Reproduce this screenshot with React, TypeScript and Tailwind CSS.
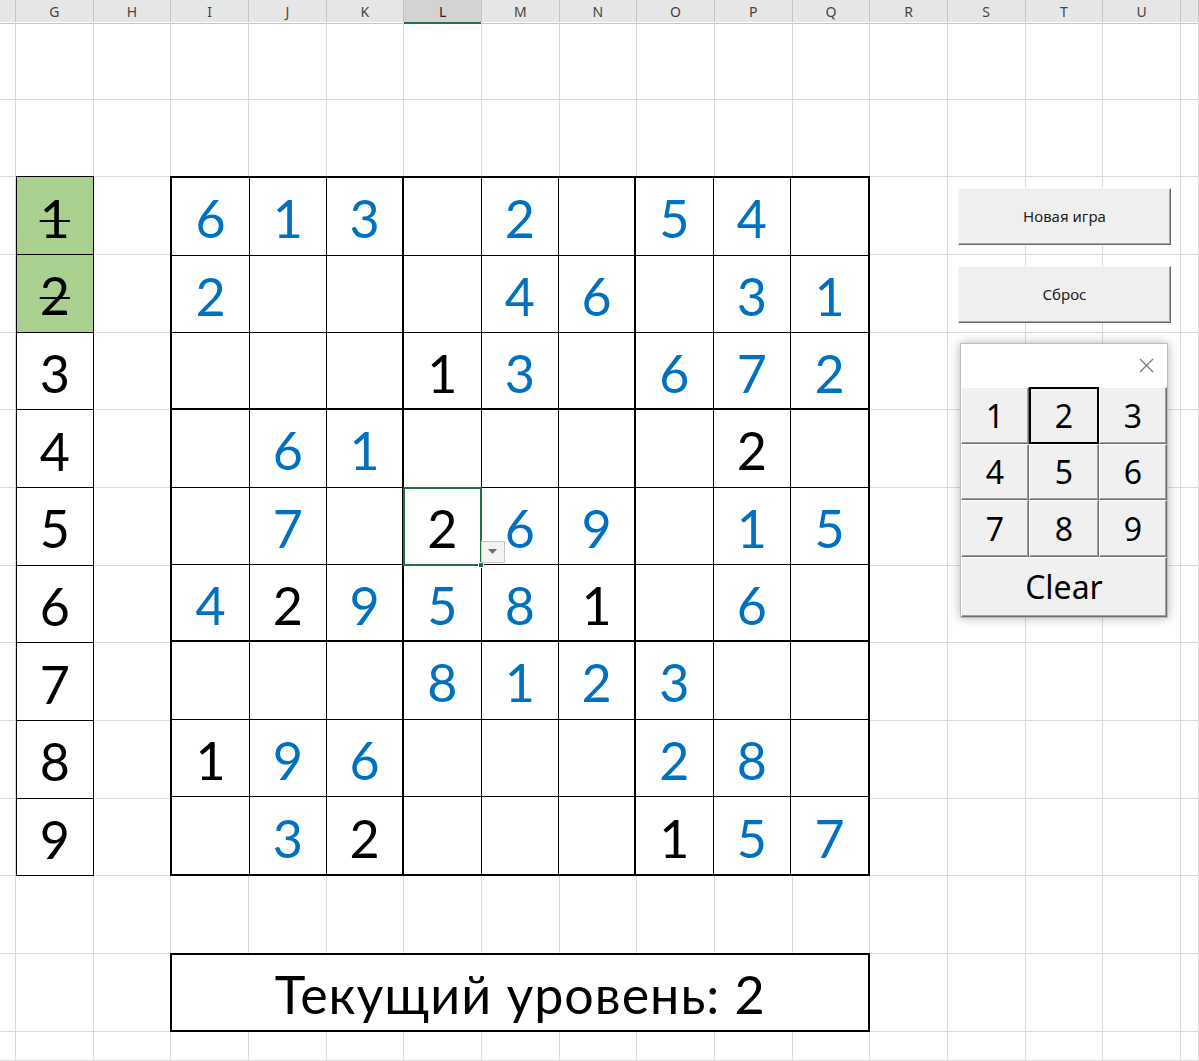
import React from "react";

const COLS = ["", "G", "H", "I", "J", "K", "L", "M", "N", "O", "P", "Q", "R", "S", "T", "U", ""];

// "k" suffix = digit typed by the player (black), otherwise a given (blue)
const BOARD = [
  ["6", "1", "3", "", "2", "", "5", "4", ""],
  ["2", "", "", "", "4", "6", "", "3", "1"],
  ["", "", "", "1k", "3", "", "6", "7", "2"],
  ["", "6", "1", "", "", "", "", "2k", ""],
  ["", "7", "", "2k", "6", "9", "", "1", "5"],
  ["4", "2k", "9", "5", "8", "1k", "", "6", ""],
  ["", "", "", "8", "1", "2", "3", "", ""],
  ["1k", "9", "6", "", "", "", "2", "8", ""],
  ["", "3", "2k", "", "", "", "1k", "5", "7"],
];

const USED = [1, 2];

const cellFont = "font-['Lato','Open_Sans',sans-serif] text-[52px] leading-none";

function Header() {
  return (
    <div className="grid h-[22px] grid-cols-[16px_repeat(15,77.67px)_1fr] bg-[#e6e6e6]">
      {COLS.map((c, i) =>
        c === "L" ? (
          <div
            key={i}
            className="flex items-center justify-center border-r border-b-2 border-r-[#c4c4c4] border-b-[#217346] bg-[#d3d3d3] pt-[1px] text-[14px] text-[#222]"
          >
            {c}
          </div>
        ) : (
          <div
            key={i}
            className="flex items-center justify-center border-r border-b border-[#c4c4c4] text-[14px] text-[#444]"
          >
            {c}
          </div>
        )
      )}
    </div>
  );
}

function Board() {
  return (
    <div className="col-start-4 col-span-9 row-start-3 row-span-9 z-10 -mt-[1px] -ml-[1px] grid grid-cols-9 grid-rows-9 border-2 border-black bg-white">
      {BOARD.map((row, r) =>
        row.map((v, c) => {
          const right = c === 8 ? "" : c === 2 || c === 5 ? "border-r-2" : "border-r";
          const bottom = r === 8 ? "" : r === 2 || r === 5 ? "border-b-2" : "border-b";
          const own = v.endsWith("k");
          return (
            <div
              key={`${r}-${c}`}
              className={`flex items-center justify-center border-black pt-[4px] ${right} ${bottom} ${cellFont} ${
                own ? "text-black" : "text-[#0070c0]"
              }`}
            >
              {v.replace("k", "")}
            </div>
          );
        })
      )}
    </div>
  );
}

function Picked() {
  return (
    <div className="col-start-2 row-start-3 row-span-9 z-10 -mt-[1px] flex flex-col border border-black bg-white">
      {[1, 2, 3, 4, 5, 6, 7, 8, 9].map((n) => (
        <div
          key={n}
          className={`flex flex-1 items-center justify-center pt-[4px] ${n < 9 ? "border-b border-black" : ""} ${
            USED.includes(n) ? "bg-[#a9d08e] line-through decoration-[2px]" : ""
          } ${cellFont}`}
        >
          {n}
        </div>
      ))}
    </div>
  );
}

function KeyButton({ label, focused, wide }: { label: string; focused?: boolean; wide?: boolean }) {
  return (
    <button
      className={`flex items-center justify-center bg-[#f0f0f0] font-['Noto_Sans',sans-serif] text-[32px] leading-none text-black ${
        wide ? "col-span-3" : ""
      } ${
        focused
          ? "border-2 border-black"
          : "border border-t-white border-l-white border-r-[#6e6e6e] border-b-[#6e6e6e] shadow-[inset_-1px_-1px_0_#a0a0a0]"
      }`}
    >
      {label}
    </button>
  );
}

export default function App() {
  const cells = [];
  for (let r = 0; r < 14; r++) {
    for (let c = 0; c < 17; c++) {
      cells.push(
        <div
          key={`g-${r}-${c}`}
          className="border-r border-b border-[#dadada]"
          style={{ gridRow: r + 1, gridColumn: c + 1 }}
        />
      );
    }
  }

  return (
    <div className="relative h-[1061px] w-[1199px] overflow-hidden bg-white font-['Noto_Sans',sans-serif]">
      <Header />
      <div className="grid grid-cols-[16px_repeat(15,77.67px)_1fr] grid-rows-[repeat(13,77.67px)_1fr] h-[1039px]">
        {cells}
        <Picked />
        <Board />

        {/* active cell */}
        <div className="col-start-7 row-start-7 z-20 relative -mt-[1px] -ml-[1px] border-2 border-[#217346]">
          <div className="absolute -right-[4px] -bottom-[4px] h-[6px] w-[6px] border border-white bg-[#217346]" />
          <div className="absolute left-[calc(100%+1px)] top-[52px] flex h-[22px] w-[24px] items-center justify-center border border-[#c6c6c6] bg-[#f3f3f3]">
            <svg width="9" height="5" viewBox="0 0 9 5">
              <path d="M0 0h9L4.5 5z" fill="#6d6d6d" />
            </svg>
          </div>
        </div>

        <div
          className={`col-start-4 col-span-9 row-start-13 z-10 -mt-[1px] -ml-[1px] flex items-center justify-center border-2 border-black bg-white pt-[4px] tracking-[1px] text-black ${cellFont}`}
        >
          Текущий уровень: 2
        </div>
      </div>

      {/* sheet buttons */}
      <div className="absolute left-[958px] top-[188px] flex w-[213px] flex-col gap-[21px]">
        {["Новая игра", "Сброс"].map((t) => (
          <button
            key={t}
            className="flex h-[57px] items-center justify-center border border-t-[#f8f8f8] border-l-[#f8f8f8] border-r-[#6a6a6a] border-b-[#6a6a6a] bg-[#efefef] text-[15px] text-[#222] shadow-[inset_-1px_-1px_0_#a8a8a8]"
          >
            {t}
          </button>
        ))}
      </div>

      {/* floating keypad form */}
      <div className="absolute left-[960px] top-[343px] w-[208px] border border-[#bdbdbd] bg-white shadow-[0_0_10px_rgba(0,0,0,0.3)]">
        <div className="flex h-[43px] items-center justify-end pr-[13px]">
          <svg width="15" height="15" viewBox="0 0 15 15">
            <path d="M1 1L14 14M14 1L1 14" stroke="#7a7a7a" strokeWidth="1.3" />
          </svg>
        </div>
        <div className="grid grid-cols-[68px_70px_1fr] grid-rows-[57px_56px_57px_60px]">
          {["1", "2", "3", "4", "5", "6", "7", "8", "9"].map((n) => (
            <KeyButton key={n} label={n} focused={n === "2"} />
          ))}
          <KeyButton label="Clear" wide />
        </div>
      </div>
    </div>
  );
}
